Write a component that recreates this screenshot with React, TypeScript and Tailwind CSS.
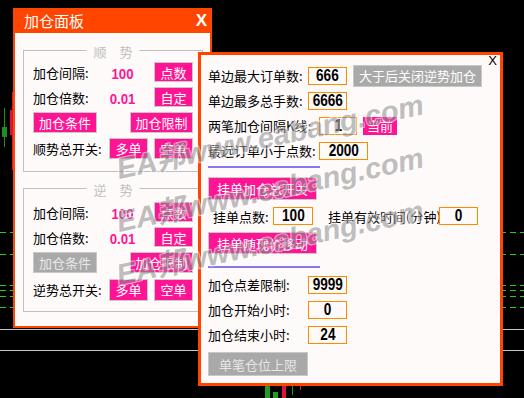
import React from "react";

const cjk = "font-['Noto_Sans_CJK_SC',sans-serif]";
const num = "font-['Liberation_Sans',Arial,sans-serif]";

const PinkBtn = ({ label, className = "" }: { label: string; className?: string }) => (
  <div
    className={`flex items-center justify-center bg-[#ff1493] border border-[#c8c8c8] text-white text-[13px] leading-none ${className}`}
  >
    {label}
  </div>
);

const GrayBtn = ({ label, className = "" }: { label: string; className?: string }) => (
  <div
    className={`flex items-center justify-center bg-[#a9a9a9] border border-[#c8c8c8] text-[13px] leading-none ${className}`}
  >
    {label}
  </div>
);

const NumBox = ({ value, className = "" }: { value: string; className?: string }) => (
  <div
    className={`flex items-center justify-center h-[18px] border border-[#ff8c00] bg-[#fffafa] ${className}`}
  >
    <span className={`${num} inline-block scale-x-[0.85] text-[16px] font-bold leading-none text-black`}>{value}</span>
  </div>
);

const PinkNum = ({ value }: { value: string }) => (
  <span className="w-[40px] text-center">
    <span className={`${num} inline-block scale-x-[0.88] text-[15px] font-bold leading-none text-[#ff1493]`}>{value}</span>
  </span>
);

const TrendGroup = ({
  title,
  switchLabel,
  condGray,
  second,
}: {
  title: string;
  switchLabel: string;
  condGray?: boolean;
  second?: boolean;
}) => (
  <div
    className={`relative w-[180px] border border-[#c0c0c0] px-[9px] flex flex-col ${
      second ? "pt-[13px] pb-[11px]" : "pt-[11px] pb-[12px]"
    }`}
  >
    <span className="absolute left-1/2 -translate-x-1/2 -top-[6px] bg-[#fffafa] px-[7px] text-[13px] leading-none text-[#c0c0c0] whitespace-nowrap">
      {title}
    </span>
    <div className="flex items-center h-[20px]">
      <span className="w-[70px] text-[13px] leading-none">加仓间隔:</span>
      <PinkNum value="100" />
      <PinkBtn label="点数" className="ml-auto w-[39px] h-[20px]" />
    </div>
    <div className="flex items-center h-[20px] mt-[5px]">
      <span className="w-[70px] text-[13px] leading-none">加仓倍数:</span>
      <PinkNum value="0.01" />
      <PinkBtn label="自定" className="ml-auto w-[39px] h-[20px]" />
    </div>
    <div className="flex items-center justify-between h-[21px] mt-[5px]">
      {condGray ? (
        <GrayBtn label="加仓条件" className="w-[64px] h-[21px] text-[#e8e8e8]" />
      ) : (
        <PinkBtn label="加仓条件" className="w-[64px] h-[21px]" />
      )}
      <PinkBtn label="加仓限制" className="w-[63px] h-[21px]" />
    </div>
    <div className={`flex items-center h-[21px] ${second ? "mt-[6px]" : "mt-[5px]"}`}>
      <span className="text-[13px] leading-none">{switchLabel}</span>
      <PinkBtn label="多单" className={`ml-auto w-[39px] ${second ? "h-[22px]" : "h-[21px]"}`} />
      <PinkBtn label="空单" className={`ml-[6px] w-[39px] ${second ? "h-[22px]" : "h-[21px]"}`} />
    </div>
  </div>
);

const ChartBg = () => (
  <svg className="absolute inset-0" width="524" height="398" viewBox="0 0 524 398">
    {[232, 254, 285, 290, 296, 307].map((y) => (
      <line key={y} x1="0" y1={y + 0.5} x2="524" y2={y + 0.5} stroke="#1fcf1f" strokeDasharray="6 4" />
    ))}
    <line x1="0" y1="329.5" x2="524" y2="329.5" stroke="#c8c8c8" />
    <line x1="0" y1="350.5" x2="524" y2="350.5" stroke="#c8c8c8" />
    <line x1="4.5" y1="108" x2="4.5" y2="147" stroke="#1f8f1f" />
    <rect x="2" y="127" width="5" height="10" fill="#1f8f1f" />
    <line x1="12.5" y1="92" x2="12.5" y2="170" stroke="#dc143c" />
    <rect x="10" y="110" width="3" height="25" fill="#dc143c" />
    <rect x="265" y="386" width="5" height="12" fill="#1f9f1f" />
    <rect x="273" y="392" width="5" height="6" fill="#1f9f1f" />
    <rect x="282" y="386" width="4" height="12" fill="#dc143c" />
    <line x1="292.5" y1="386" x2="292.5" y2="395" stroke="#1f9f1f" />
    <line x1="300.5" y1="386" x2="300.5" y2="390" stroke="#dc143c" />
  </svg>
);

const Watermark = ({ top }: { top: number }) => (
  <div
    className="absolute left-[120px] origin-[0_100%] -rotate-[12deg] whitespace-nowrap text-[29px] font-bold italic leading-none text-[#8c8c8c] opacity-55 font-['Liberation_Sans','Noto_Sans_CJK_SC',sans-serif] [text-shadow:1px_1px_0_#fff,-1px_-1px_0_#fff,1px_-1px_0_#fff,-1px_1px_0_#fff] pointer-events-none"
    style={{ top }}
  >
    EA邦www.eabang.com
  </div>
);

export default function App() {
  return (
    <div className={`relative w-[524px] h-[398px] overflow-hidden bg-black text-black ${cjk}`}>
      <ChartBg />

      {/* left window */}
      <div className="absolute left-[13px] top-[8px] w-[199px] h-[320px] bg-[#ff4500] px-[2px] pb-[2px] flex flex-col">
        <div className="h-[25px] flex items-center justify-between pl-[9px] pr-[3px]">
          <span className="text-[15px] leading-none text-white">加仓面板</span>
          <span className={`${num} text-[17px] font-bold leading-none text-white`}>X</span>
        </div>
        <div className="flex-1 bg-[#fffafa] pt-[17px] pl-[8px] flex flex-col gap-[16px]">
          <TrendGroup title="顺　势" switchLabel="顺势总开关:" />
          <TrendGroup title="逆　势" switchLabel="逆势总开关:" condGray second />
        </div>
      </div>

      {/* right window */}
      <div className="absolute left-[198px] top-[52px] w-[305px] h-[334px] border-[3px] border-[#ff4500] bg-[#fffafa] pt-[8px] pl-[7px] flex flex-col">
        <span className={`${num} absolute right-[3px] -top-[1px] text-[13px] leading-none`}>X</span>

        <div className="flex items-center h-[25px]">
          <span className="w-[100px] text-[13px] leading-none">单边最大订单数:</span>
          <NumBox value="666" className="w-[39px]" />
          <GrayBtn label="大于后关闭逆势加仓" className="ml-[6px] w-[129px] h-[22px] text-white" />
        </div>
        <div className="flex items-center h-[25px]">
          <span className="w-[100px] text-[13px] leading-none">单边最多总手数:</span>
          <NumBox value="6666" className="w-[39px]" />
        </div>
        <div className="flex items-center h-[25px]">
          <span className="w-[111px] text-[13px] leading-none">两笔加仓间隔K线:</span>
          <NumBox value="1" className="w-[38px]" />
          <div className="ml-[6px] w-[34px] h-[18px] flex items-center justify-center bg-[#ff1493] text-white text-[13px] leading-none">
            当前
          </div>
        </div>
        <div className="flex items-center h-[25px]">
          <span className="w-[111px] text-[13px] leading-none">最远订单小于点数:</span>
          <NumBox value="2000" className="w-[49px]" />
        </div>

        <div className="mt-[3px] h-[2px] w-[112px] bg-[#8878f0]" />

        <PinkBtn label="挂单加仓总开关" className="mt-[9px] w-[109px] h-[23px]" />

        <div className="mt-[4px] h-[24px] flex items-center pl-[5px]">
          <span className="w-[60px] text-[13px] leading-none">挂单点数:</span>
          <NumBox value="100" className="w-[40px]" />
          <span className="ml-[15px] w-[111px] text-[13px] leading-none whitespace-nowrap">挂单有效时间(分钟)</span>
          <NumBox value="0" className="w-[39px]" />
        </div>

        <PinkBtn label="挂单随现价移动" className="mt-[4px] w-[109px] h-[22px]" />

        <div className="mt-[12px] h-[2px] w-[112px] bg-[#8878f0]" />

        <div className="mt-[4px] flex items-center h-[25px]">
          <span className="w-[100px] text-[13px] leading-none">加仓点差限制:</span>
          <NumBox value="9999" className="w-[39px]" />
        </div>
        <div className="flex items-center h-[25px]">
          <span className="w-[100px] text-[13px] leading-none">加仓开始小时:</span>
          <NumBox value="0" className="w-[39px]" />
        </div>
        <div className="flex items-center h-[25px]">
          <span className="w-[100px] text-[13px] leading-none">加仓结束小时:</span>
          <NumBox value="24" className="w-[39px]" />
        </div>

        <GrayBtn label="单笔仓位上限" className="mt-[5px] w-[100px] h-[24px] text-[#e6e6e6]" />
      </div>

      <Watermark top={155} />
      <Watermark top={208} />
      <Watermark top={261} />
    </div>
  );
}
